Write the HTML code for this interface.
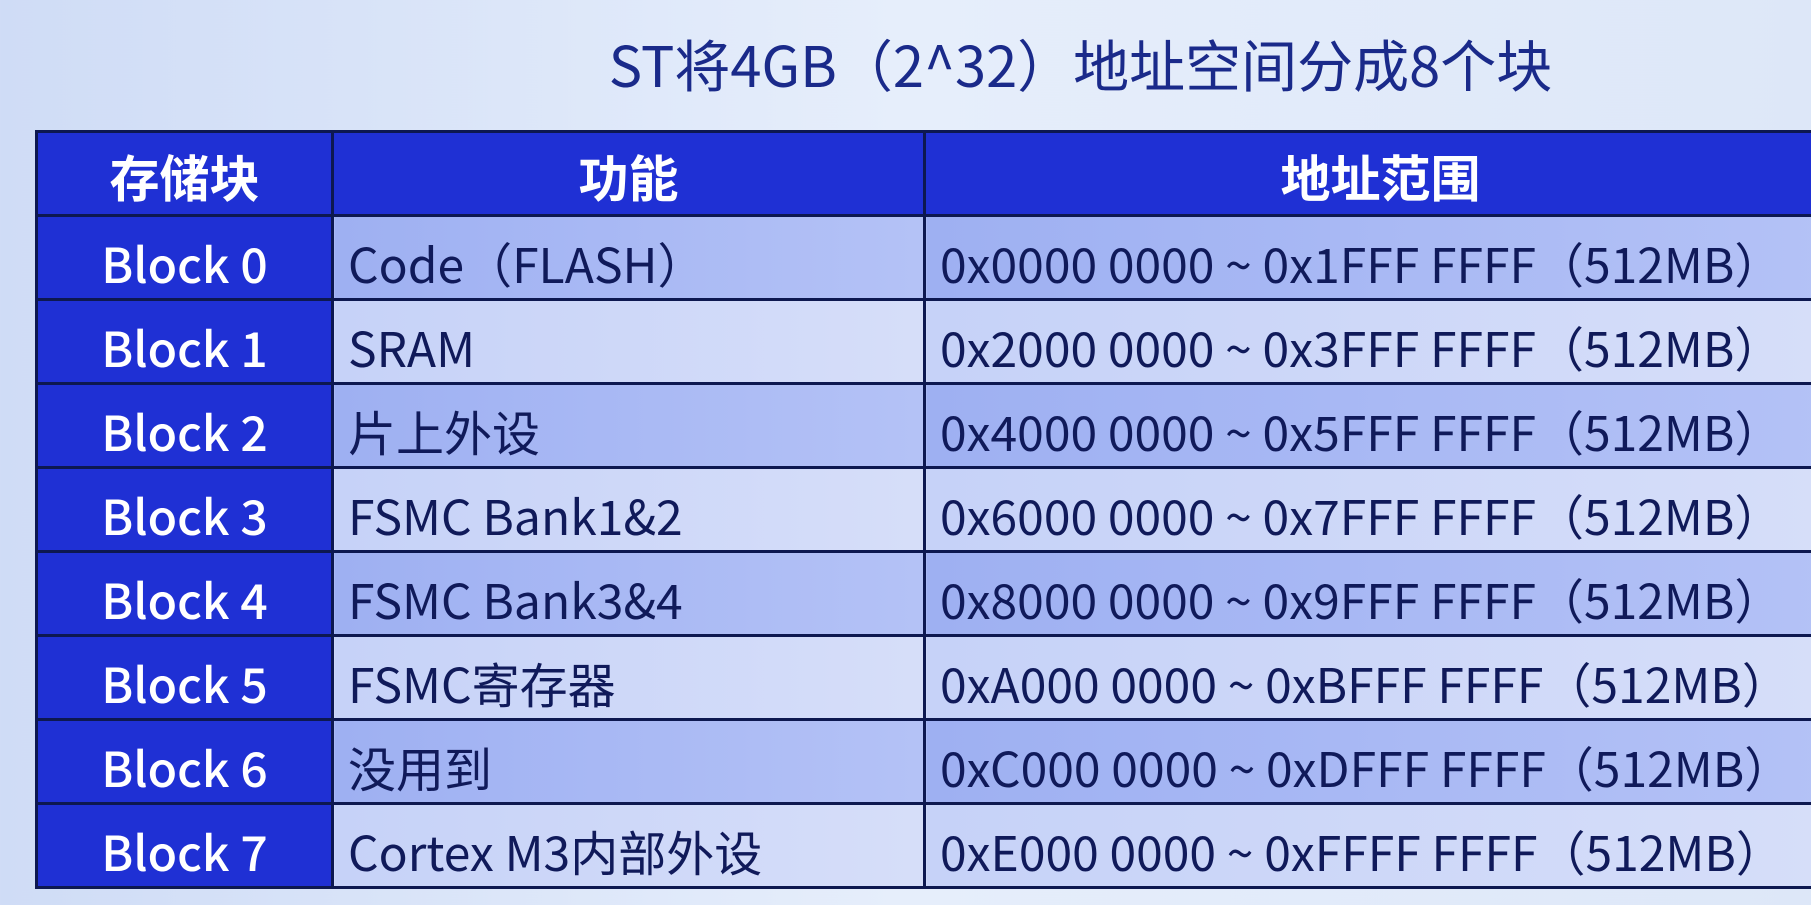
<!DOCTYPE html><html><head><meta charset="utf-8"><style>
body{margin:0;width:1811px;height:905px;overflow:hidden;background:linear-gradient(90deg,#cfdcf6,#e6eefb 50%,#dde7f8);font-family:"Noto Sans CJK SC",sans-serif;position:relative}
h1{position:absolute;left:0;width:1811px;top:30px;margin:0;text-align:center;font-weight:normal;font-size:56px;color:#1a2a8a;padding-left:350px;box-sizing:border-box;line-height:1.2}
table{position:absolute;left:35px;top:130px;border-collapse:collapse;width:1800px;table-layout:fixed}
td{border:3px solid #0d1850;height:84px;font-size:48px;color:#101a5a;padding:8px 0 0 14px;box-sizing:border-box;white-space:nowrap;line-height:1;overflow:hidden}
tr.h td{background:#1f30d4;color:#fff;text-align:center;font-size:50px;font-weight:bold;padding:4px 0 0}
td.b{background:#1f30d4;color:#fff;text-align:center;padding:8px 0 0;font-weight:500;font-size:48px}
tr.o td.f,tr.o td.a{background:linear-gradient(90deg,#9eb0f2,#b4c2f6)}
tr.e td.f,tr.e td.a{background:linear-gradient(90deg,#c6d2f8,#d6def9)}
</style></head><body>
<h1>ST将4GB（2^32）地址空间分成8个块</h1>
<table>
<colgroup><col style="width:296px"><col style="width:592px"><col style="width:912px"></colgroup>
<tr class="h"><td>存储块</td><td>功能</td><td>地址范围</td></tr>
<tr class="o"><td class="b">Block 0</td><td class="f">Code（FLASH）</td><td class="a">0x0000 0000 ~ 0x1FFF FFFF（512MB）</td></tr>
<tr class="e"><td class="b">Block 1</td><td class="f">SRAM</td><td class="a">0x2000 0000 ~ 0x3FFF FFFF（512MB）</td></tr>
<tr class="o"><td class="b">Block 2</td><td class="f">片上外设</td><td class="a">0x4000 0000 ~ 0x5FFF FFFF（512MB）</td></tr>
<tr class="e"><td class="b">Block 3</td><td class="f">FSMC Bank1&amp;2</td><td class="a">0x6000 0000 ~ 0x7FFF FFFF（512MB）</td></tr>
<tr class="o"><td class="b">Block 4</td><td class="f">FSMC Bank3&amp;4</td><td class="a">0x8000 0000 ~ 0x9FFF FFFF（512MB）</td></tr>
<tr class="e"><td class="b">Block 5</td><td class="f">FSMC寄存器</td><td class="a">0xA000 0000 ~ 0xBFFF FFFF（512MB）</td></tr>
<tr class="o"><td class="b">Block 6</td><td class="f">没用到</td><td class="a">0xC000 0000 ~ 0xDFFF FFFF（512MB）</td></tr>
<tr class="e"><td class="b">Block 7</td><td class="f">Cortex M3内部外设</td><td class="a">0xE000 0000 ~ 0xFFFF FFFF（512MB）</td></tr>
</table>
</body></html>
